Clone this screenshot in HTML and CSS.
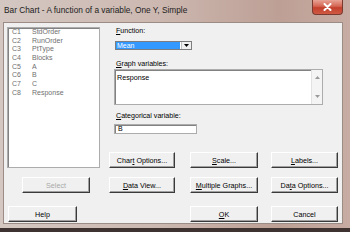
FILE: index.html
```html
<!DOCTYPE html>
<html>
<head>
<meta charset="utf-8">
<link rel="stylesheet" href="styles.css">
</head>
<body>
<div class="window">
  <div class="titlebar">
    <span class="title">Bar Chart - A function of a variable, One Y, Simple</span>
    <div class="close"><svg width="9" height="8" viewBox="0 0 9 8"><path d="M1.5 1 L7.5 7 M7.5 1 L1.5 7" stroke="#fff" stroke-width="2" stroke-linecap="round"/></svg></div>
  </div>
  <div class="client">
    <div class="varlist">
      <div class="row"><span class="code">C1</span><span>StdOrder</span></div>
      <div class="row"><span class="code">C2</span><span>RunOrder</span></div>
      <div class="row"><span class="code">C3</span><span>PtType</span></div>
      <div class="row"><span class="code">C4</span><span>Blocks</span></div>
      <div class="row"><span class="code">C5</span><span>A</span></div>
      <div class="row"><span class="code">C6</span><span>B</span></div>
      <div class="row"><span class="code">C7</span><span>C</span></div>
      <div class="row"><span class="code">C8</span><span>Response</span></div>
    </div>
    <div class="fields">
      <div class="label"><u>F</u>unction:</div>
      <div class="combo">
        <div class="combo-value">Mean</div>
        <div class="combo-btn"><svg width="5" height="3" viewBox="0 0 5 3"><path d="M0 0 H5 L2.5 3 Z" fill="#000"/></svg></div>
      </div>
      <div class="label gap-graph"><u>G</u>raph variables:</div>
      <div class="textarea">
        <div class="textarea-text">Response</div>
        <div class="scroll">
          <svg width="5" height="3" viewBox="0 0 5 3"><path d="M0 3 L2.5 0 L5 3 Z" fill="#9a9a9a"/></svg>
          <svg width="5" height="3" viewBox="0 0 5 3"><path d="M0 0 H5 L2.5 3 Z" fill="#9a9a9a"/></svg>
        </div>
      </div>
      <div class="label gap-cat"><u>C</u>ategorical variable:</div>
      <div class="textbox">B</div>
    </div>
    <div class="btn b-chart"><span>Char<u>t</u> Options...</span></div>
    <div class="btn b-scale"><span><u>S</u>cale...</span></div>
    <div class="btn b-labels"><span><u>L</u>abels...</span></div>
    <div class="btn b-select disabled"><span>Select</span></div>
    <div class="btn b-dataview"><span><u>D</u>ata View...</span></div>
    <div class="btn b-multi"><span><u>M</u>ultiple Graphs...</span></div>
    <div class="btn b-dataopt"><span>Da<u>t</u>a Options...</span></div>
    <div class="btn b-help"><span>Help</span></div>
    <div class="btn b-ok"><span><u>O</u>K</span></div>
    <div class="btn b-cancel"><span>Cancel</span></div>
  </div>
</div>
</body>
</html>
```
FILE: styles.css
```css
html, body {
  margin: 0;
  padding: 0;
}
body {
  width: 350px;
  height: 232px;
  background: #3e3330;
  overflow: hidden;
  font-family: "Liberation Sans", Arial, sans-serif;
}
.window {
  width: 350px;
  height: 228px;
  background: linear-gradient(90deg, #d4c7c2 0%, #ccb8b0 45%, #bd9f95 80%, #c7aca3 100%);
  display: flex;
  flex-direction: column;
}
.titlebar {
  height: 22px;
  display: flex;
  align-items: flex-start;
  justify-content: space-between;
  padding-left: 4px;
  padding-right: 7px;
  box-sizing: border-box;
}
.title {
  font-size: 8.3px;
  line-height: 9px;
  margin-top: 6px;
  color: #1c1c1c;
}
.close {
  width: 31px;
  height: 15px;
  border: 1px solid #7a3a30;
  border-top: none;
  box-sizing: border-box;
  border-radius: 0 0 4px 4px;
  background: linear-gradient(180deg, #e7a395 0%, #d46552 45%, #c2402c 55%, #cf5a44 100%);
  display: flex;
  align-items: center;
  justify-content: center;
}
.client {
  margin-left: 3px;
  width: 340px;
  height: 202px;
  box-sizing: border-box;
  border: 1px solid #9b8c86;
  background: #f0f0f0;
  padding: 4px 0 0 3px;
  display: grid;
  grid-template-columns: 93px 9px 66px 15px 68px 13px 67px;
  grid-template-rows: 125px 16px 9px 16px 13px 16px;
  font-size: 7.2px;
  color: #000;
}
.varlist {
  grid-column: 1;
  grid-row: 1 / 3;
  background: #fff;
  border: 1px solid #acacac;
  box-shadow: inset 1px 1px 0 #828282;
  padding: 0 0 0 4px;
  font-size: 7px;
  color: #6f6f6f;
}
.row {
  display: flex;
  height: 8.7px;
  line-height: 8.7px;
}
.code {
  width: 20px;
}
.fields {
  grid-column: 3 / 8;
  grid-row: 1;
  padding-left: 5px;
  display: flex;
  flex-direction: column;
  align-items: flex-start;
}
.label {
  line-height: 9px;
  height: 9px;
  padding-left: 2px;
  font-size: 7.1px;
}
.gap-graph {
  margin-top: 10px;
}
.gap-cat {
  margin-top: 7px;
}
.combo {
  margin-top: 5px;
  margin-left: 1px;
  width: 77px;
  height: 9px;
  box-sizing: border-box;
  border: 1px solid #7d7d7d;
  background: #fff;
  display: flex;
}
.combo-value {
  flex: 1;
  background: #3399ff;
  color: #fff;
  margin: 0 1px 0 0;
  line-height: 7px;
  padding-left: 1px;
  font-size: 7px;
}
.combo-btn {
  width: 9px;
  background: #f0f0f0;
  border-left: 1px solid #c0c0c0;
  display: flex;
  align-items: center;
  justify-content: center;
}
.textarea {
  width: 209px;
  height: 36px;
  box-sizing: border-box;
  border: 1px solid #acacac;
  box-shadow: inset 1px 1px 0 #828282;
  background: #fff;
  display: flex;
}
.textarea-text {
  flex: 1;
  padding: 3px 0 0 2px;
  line-height: 9px;
}
.scroll {
  width: 10px;
  background: #f4f4f4;
  border-left: 1px solid #e2e2e2;
  display: flex;
  flex-direction: column;
  align-items: center;
  justify-content: space-between;
  padding: 6px 0 6px 0;
}
.textbox {
  margin-top: 3px;
  width: 83px;
  height: 10px;
  box-sizing: border-box;
  border: 1px solid #acacac;
  box-shadow: inset 1px 1px 0 #828282;
  background: #fff;
  line-height: 8px;
  padding-left: 3px;
  font-size: 7px;
}
.btn {
  box-sizing: border-box;
  height: 16px;
  border-top: 1px solid #ffffff;
  border-left: 1px solid #ffffff;
  border-right: 1px solid #3a3a3a;
  border-bottom: 1px solid #3a3a3a;
  box-shadow: inset -1px -1px 0 #a0a0a0;
  background: #f0f0f0;
  display: flex;
  align-items: center;
  justify-content: center;
  white-space: nowrap;
  font-size: 7.2px;
}
.disabled {
  color: #a8a8a8;
}
.b-chart { grid-column: 3; grid-row: 2; }
.b-scale { grid-column: 5; grid-row: 2; }
.b-labels { grid-column: 7; grid-row: 2; }
.b-select { grid-column: 1; grid-row: 4; margin-left: 15px; margin-right: 10px; }
.b-dataview { grid-column: 3; grid-row: 4; }
.b-multi { grid-column: 5; grid-row: 4; }
.b-dataopt { grid-column: 7; grid-row: 4; }
.b-help { grid-column: 1; grid-row: 6; margin-left: 1px; margin-right: 23px; }
.b-ok { grid-column: 5; grid-row: 6; }
.b-cancel { grid-column: 7; grid-row: 6; }
```
